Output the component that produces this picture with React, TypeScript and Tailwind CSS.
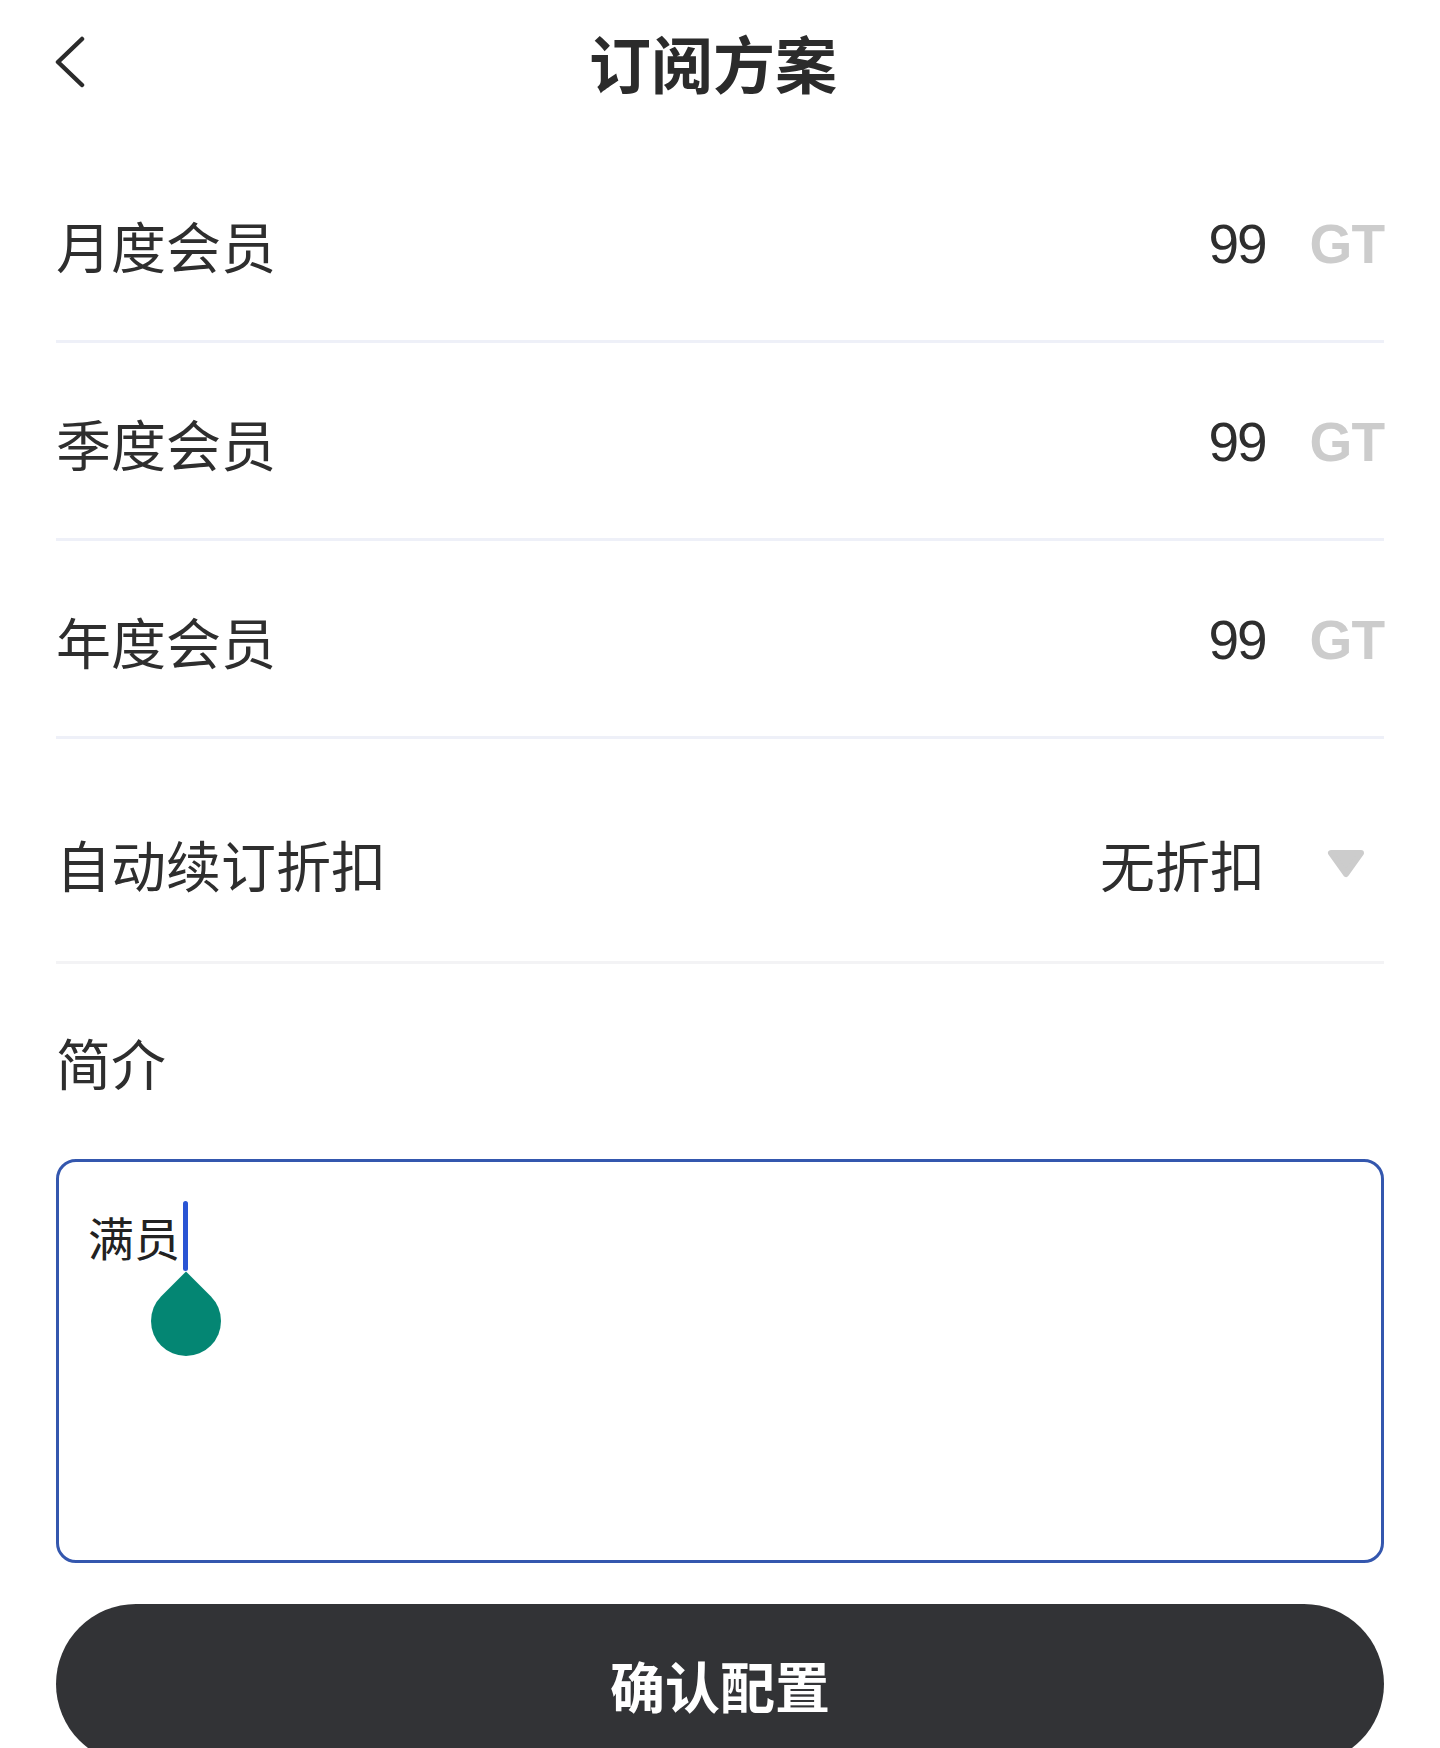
import React from "react";

const cjk = { fontFamily: '"Noto Sans CJK SC", "Noto Sans", sans-serif' };
const latin = { fontFamily: '"Liberation Sans", "Noto Sans CJK SC", sans-serif' };

const plans = ["月度会员", "季度会员", "年度会员"];

function BackIcon() {
    return (
        <svg width="32" height="52" viewBox="0 0 32 52" fill="none">
            <path
                d="M27 3L3 26L27 49"
                stroke="#2b2b2b"
                strokeWidth="4.5"
                strokeLinecap="round"
                strokeLinejoin="round"
            />
        </svg>
    );
}

function CaretDown() {
    return (
        <svg width="38" height="29" viewBox="0 0 38 29">
            <path
                d="M4 4H34L19 25Z"
                fill="#cccccc"
                stroke="#cccccc"
                strokeWidth="6"
                strokeLinejoin="round"
            />
        </svg>
    );
}

const PlanRow = ({ label }: { label: string }) => (
    <div className="h-[198px] pt-[4px] flex items-center justify-between border-b-[3px] border-[#eef0f8]">
        <span className="text-[55px] leading-none text-[#2e2e2e]" style={cjk}>
            {label}
        </span>
        <div className="flex items-center gap-[44px]">
            <span className="text-[55px] leading-none text-[#2e2e2e] tracking-[-2px]" style={latin}>
                99
            </span>
            <span className="text-[55px] leading-none font-bold text-[#cccccc] tracking-[-1px]" style={latin}>
                GT
            </span>
        </div>
    </div>
);

export default function App() {
    return (
        <div className="w-[1440px] h-[1748px] overflow-hidden bg-white" style={cjk}>
            {/* Header */}
            <div className="h-[124px] grid grid-cols-[1fr_auto_1fr] items-center px-[55px]">
                <div className="flex items-center">
                    <BackIcon />
                </div>
                <h1 className="text-[62px] leading-none font-bold text-[#2b2b2b] pr-[14px]">订阅方案</h1>
                <div />
            </div>

            <div className="px-[56px] pt-[21px]">
                {plans.map((p) => (
                    <PlanRow key={p} label={p} />
                ))}

                {/* Auto renewal discount */}
                <div className="h-[225px] pt-[26px] flex items-center justify-between border-b-[3px] border-[#f3f3f5]">
                    <span className="text-[55px] leading-none text-[#2e2e2e]">自动续订折扣</span>
                    <div className="flex items-center gap-[62px] pr-[19px]">
                        <span className="text-[55px] leading-none text-[#2e2e2e]">无折扣</span>
                        <CaretDown />
                    </div>
                </div>

                {/* Intro */}
                <div className="pt-[69px] text-[55px] leading-[56px] text-[#2e2e2e]">简介</div>

                <div className="mt-[70px] h-[404px] rounded-[20px] border-[3px] border-[#3457ae] pl-[29px] pt-[39px]">
                    <div className="flex items-center">
                        <span className="text-[46px] leading-none text-[#222222]">满员</span>
                        <div className="relative ml-[3px]">
                            <div className="w-[5px] h-[70px] rounded-full bg-[#2a55d4]" />
                            <div className="absolute left-1/2 top-[85px] w-[70px] h-[70px] -translate-x-1/2 rotate-45 rounded-full rounded-tl-none bg-[#048673]" />
                        </div>
                    </div>
                </div>

                <button className="mt-[41px] w-full h-[160px] rounded-full bg-[#323336] text-white text-[55px] font-bold leading-none flex items-center justify-center">
                    确认配置
                </button>
            </div>
        </div>
    );
}
